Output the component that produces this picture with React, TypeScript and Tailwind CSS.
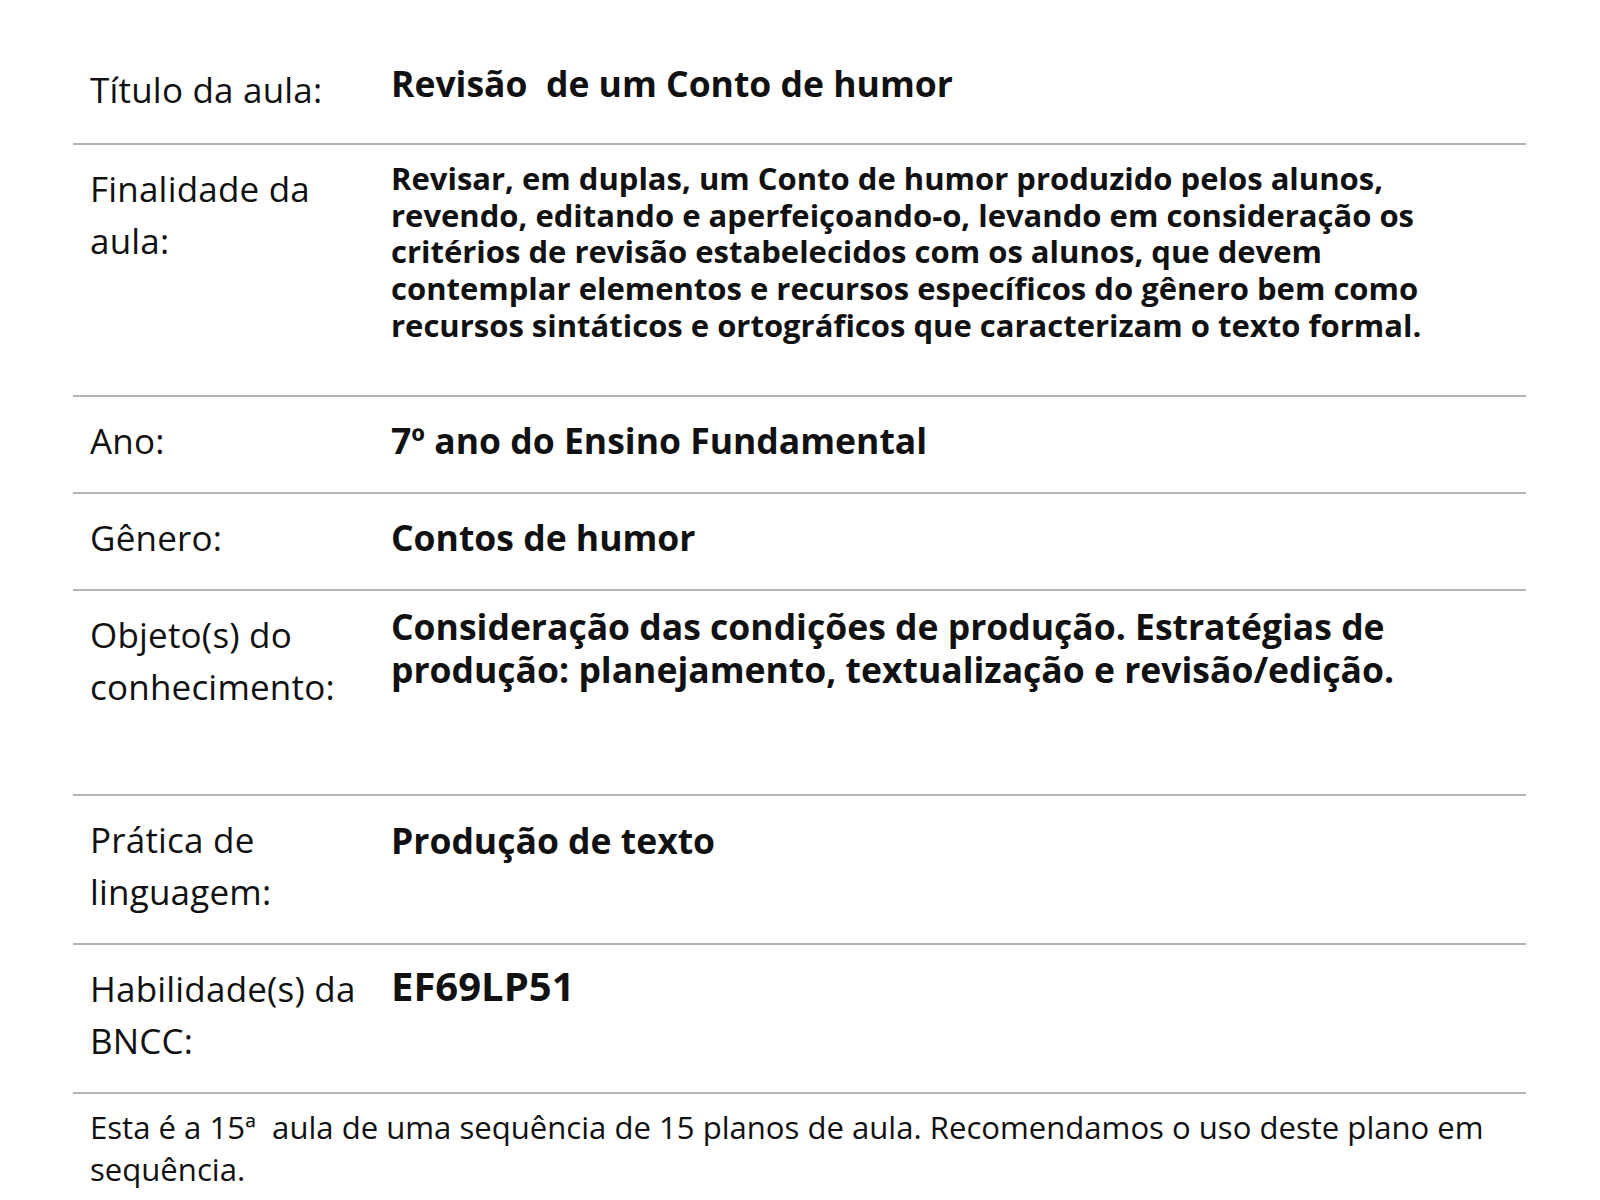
const font = { fontFamily: '"Open Sans", "Noto Sans", sans-serif' };

type Row = {
  label: string;
  value: string;
  height: string;
  valueClass: string;
};

const rows: Row[] = [
  {
    label: "Finalidade da aula:",
    value:
      "Revisar, em duplas, um Conto de humor produzido pelos alunos, revendo, editando e aperfeiçoando-o, levando em consideração os critérios de revisão estabelecidos com os alunos, que devem contemplar elementos e recursos específicos do gênero bem como recursos sintáticos e ortográficos que caracterizam o texto formal.",
    height: "h-[252px]",
    valueClass: "text-[31px] leading-[36.7px] pt-[15px] pr-[80px]",
  },
  {
    label: "Ano:",
    value: "7º ano do Ensino Fundamental",
    height: "h-[97px]",
    valueClass: "text-[35.5px] leading-[52px] pt-[17px]",
  },
  {
    label: "Gênero:",
    value: "Contos de humor",
    height: "h-[97px]",
    valueClass: "text-[35.5px] leading-[52px] pt-[17px]",
  },
  {
    label: "Objeto(s) do conhecimento:",
    value:
      "Consideração das condições de produção. Estratégias de produção: planejamento, textualização e revisão/edição.",
    height: "h-[205px]",
    valueClass: "text-[35.5px] leading-[43px] pt-[14px] pr-[80px]",
  },
  {
    label: "Prática de linguagem:",
    value: "Produção de texto",
    height: "h-[149px]",
    valueClass: "text-[35.5px] leading-[52px] pt-[18px]",
  },
  {
    label: "Habilidade(s) da BNCC:",
    value: "EF69LP51",
    height: "h-[149px]",
    valueClass: "text-[40px] leading-[52px] pt-[15px]",
  },
];

function PlanRow({ row }: { row: Row }) {
  return (
    <div className={`grid grid-cols-[318px_1fr] border-b-2 border-[#b4b4b4] ${row.height}`}>
      <div className="pl-[17px] pt-[18px] pr-[6px] text-[35px] leading-[52px] tracking-[0.2px] text-[#111]">
        {row.label}
      </div>
      <div className={`font-bold text-[#111] ${row.valueClass}`}>{row.value}</div>
    </div>
  );
}

export default function App() {
  return (
    <div className="w-[1600px] h-[1200px] bg-white overflow-hidden" style={font}>
      <div className="ml-[73px] w-[1453px]">
        {/* Title */}
        <div className="grid grid-cols-[318px_1fr] h-[145px] border-b-2 border-[#b4b4b4]">
          <div className="pl-[17px] pt-[64px] text-[35px] leading-[52px] tracking-[0.2px] text-[#111]">
            Título da aula:
          </div>
          <div className="pt-[57px] text-[35.5px] leading-[52px] font-bold text-[#111] whitespace-pre">
            Revisão  de um Conto de humor
          </div>
        </div>

        {rows.map((r) => (
          <PlanRow key={r.label} row={r} />
        ))}

        {/* Footer note */}
        <p className="pl-[17px] pt-[12px] pr-[20px] text-[31.1px] leading-[42px] text-[#111]">
          Esta é a 15ª&nbsp; aula de uma sequência de 15 planos de aula. Recomendamos o uso deste plano em sequência.
        </p>
      </div>
    </div>
  );
}
